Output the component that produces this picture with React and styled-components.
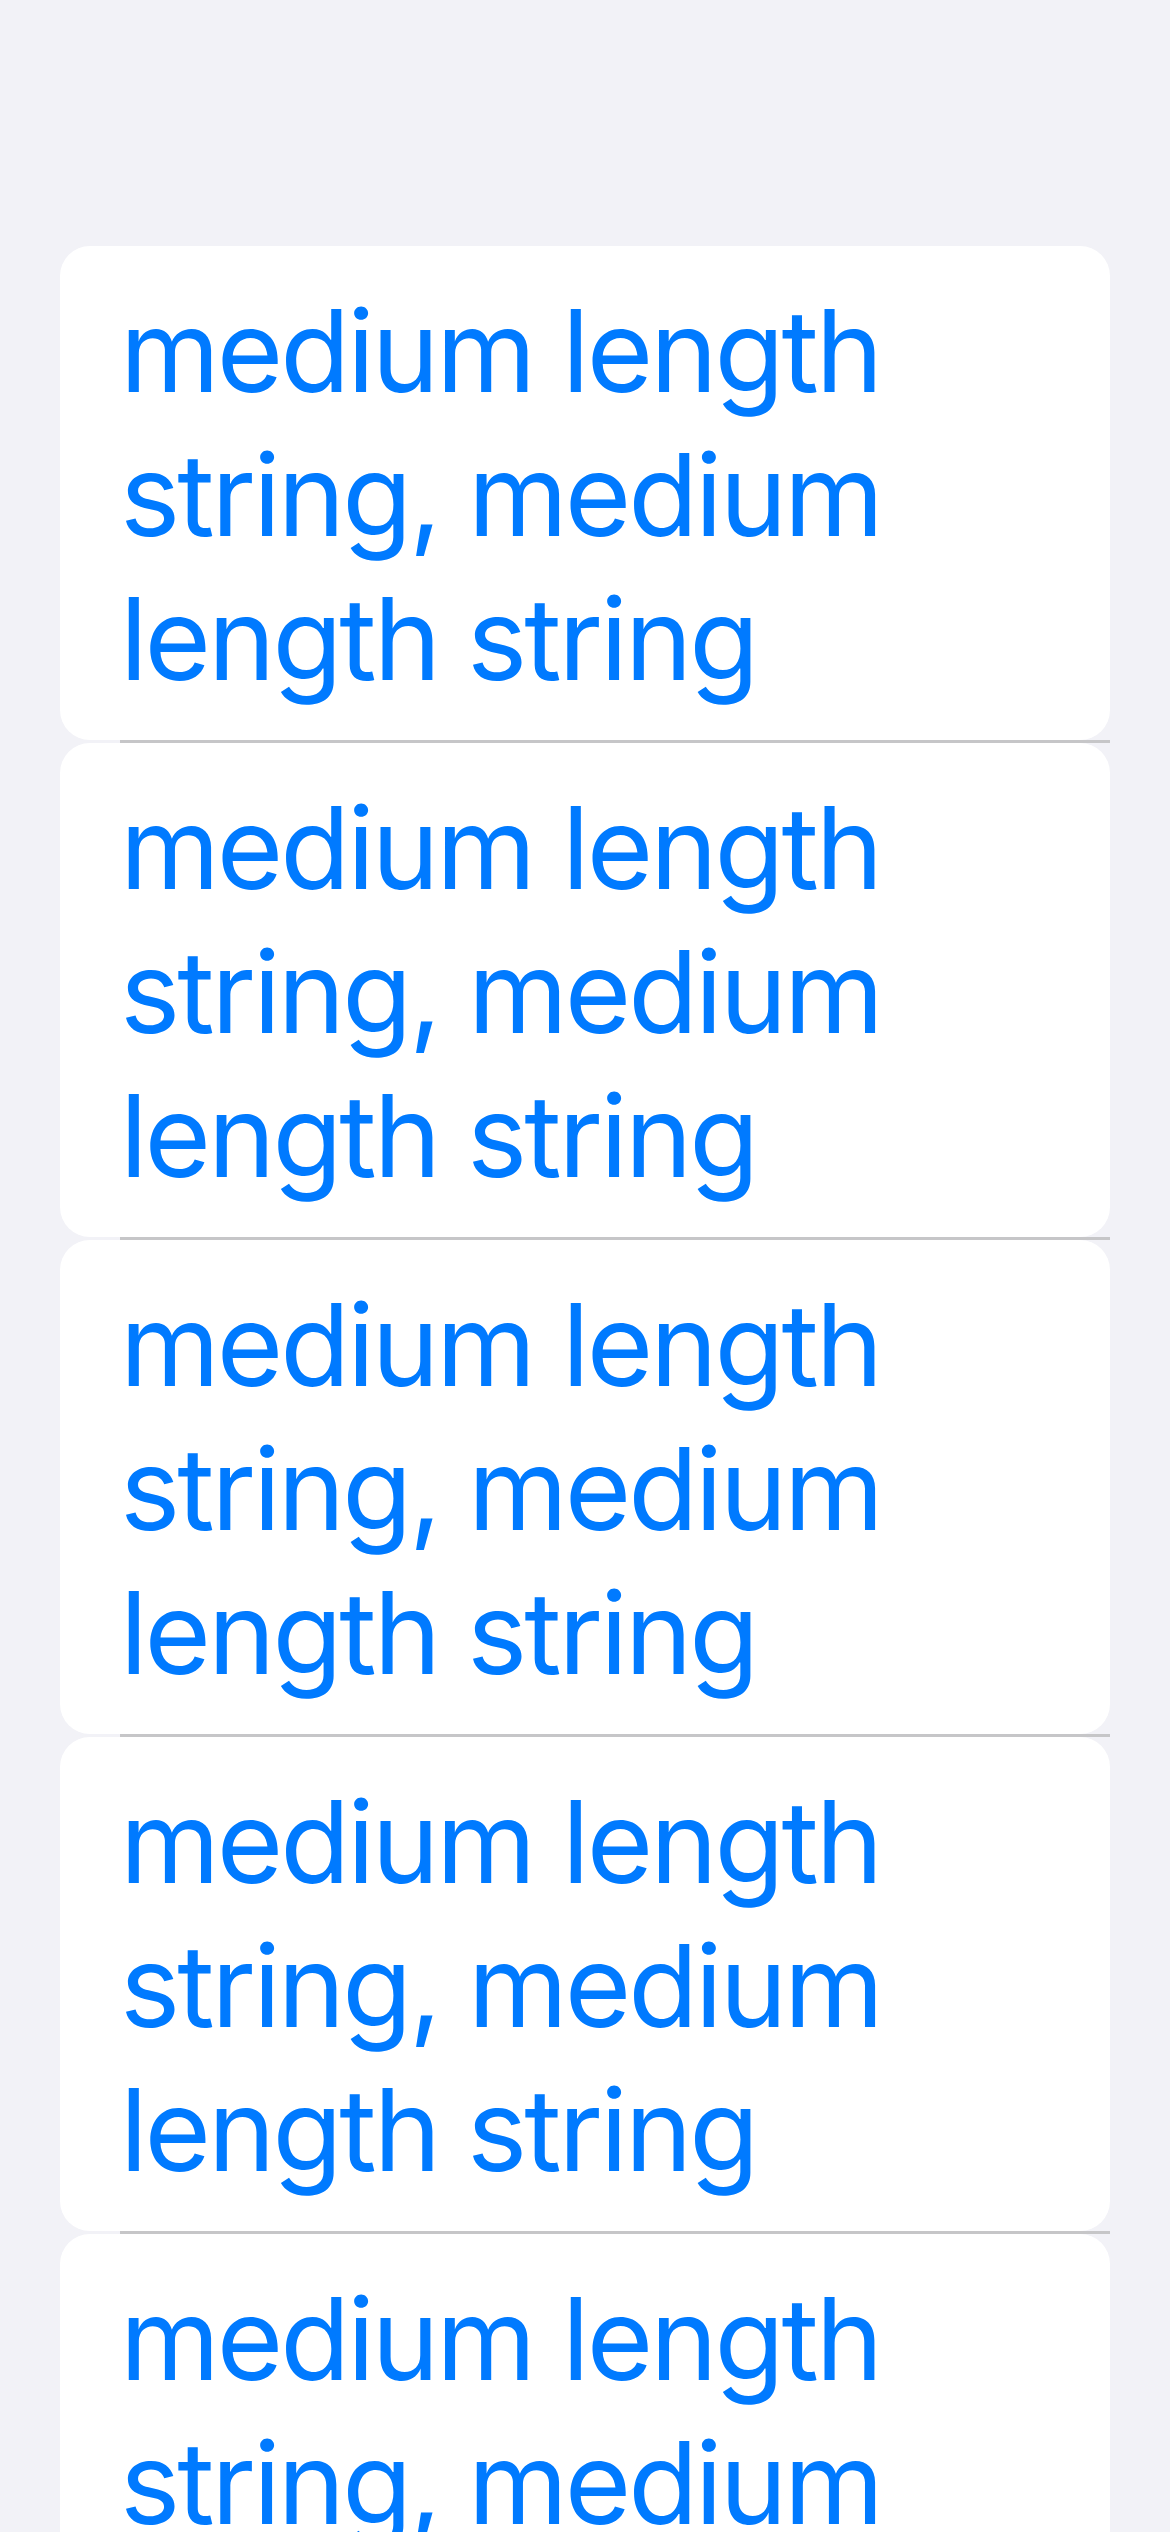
import React from 'react'
import styled, { createGlobalStyle } from 'styled-components';

const GlobalStyle = createGlobalStyle`
  html, body {
    margin: 0;
    padding: 0;
    background: #f2f2f7;
  }
`;

const items = Array.from({ length: 5 }, () => 'medium length string, medium length string');

function App() {
  return (
    <Page>
      <GlobalStyle />
      <List>
        {items.map((text, i) => (
          <Row key={i}>
            <Cell>
              <Label>{text}</Label>
            </Cell>
            <Divider />
          </Row>
        ))}
      </List>
    </Page>
  )
}

export default App

const Page = styled.div`
  min-height: 2532px;
  background: #f2f2f7;
  padding: 246px 60px 0;
  box-sizing: border-box;
  overflow: hidden;
`;
const List = styled.div`
  display: flex;
  flex-direction: column;
`;
const Row = styled.div`
  display: flex;
  flex-direction: column;
`;
const Cell = styled.div`
  background: #ffffff;
  border-radius: 30px;
  padding: 33px 60px 29px 60px;
  height: 494px;
  box-sizing: border-box;
`;
const Label = styled.div`
  color: #007aff;
  font-family: Inter, "Noto Sans", sans-serif;
  font-size: 114px;
  line-height: 144px;
  letter-spacing: -3px;
  width: 820px;
`;
const Divider = styled.div`
  height: 3px;
  margin-left: 60px;
  background: #c6c6c8;
`;
